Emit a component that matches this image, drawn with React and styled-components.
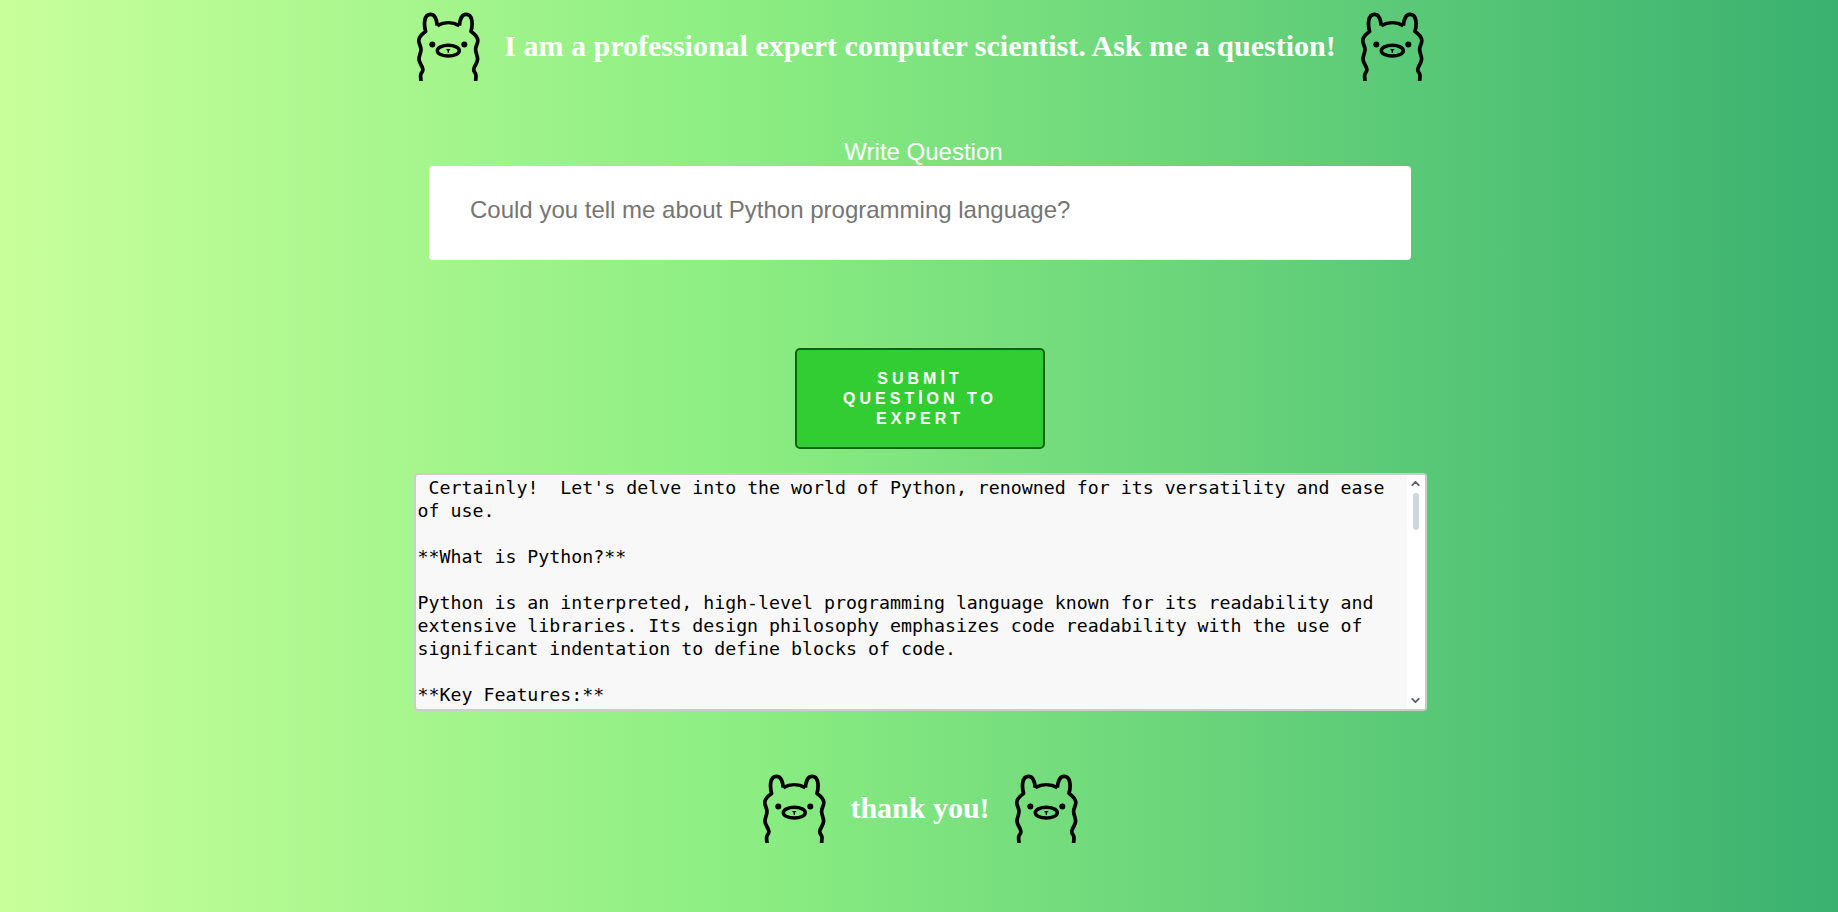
import React from "react";
import styled, { createGlobalStyle } from "styled-components";
import { ChevronUp, ChevronDown } from "lucide-react";

const answer = ` Certainly!  Let's delve into the world of Python, renowned for its versatility and ease of use.

**What is Python?**

Python is an interpreted, high-level programming language known for its readability and extensive libraries. Its design philosophy emphasizes code readability with the use of significant indentation to define blocks of code.

**Key Features:**

* **Readability:** Clean syntax that reads almost like English.
* **Libraries:** A large standard library and a wide package ecosystem.
* **Versatility:** Used for web development, data science and automation.`;

function Llama () {
    return (
        <LlamaSvg viewBox="0 0 64 70">
            <g fill="none" stroke="#000" strokeWidth="3.7" strokeLinejoin="round">
                <path d="M5 70.5C5 67 4.2 66 4.8 63.5C5.4 61.5 7.3 60.5 6.8 58C6 54 3 52 3 48C3 44.5 5 42 5 38.5C5 35 2.8 33 2.8 29.5C2.8 25.5 6 23 9.6 20.5C7.6 13 8 3.4 14.5 3.4C19.5 3.4 20.8 10 21.2 14.6" />
                <path d="M59.6 70.5C59.6 67 60.4 66 59.8 63.5C59.2 61.5 57.3 60.5 57.8 58C58.6 54 61.6 52 61.6 48C61.6 44.5 59.6 42 59.6 38.5C59.6 35 61.8 33 61.8 29.5C61.8 25.5 58.6 23 55 20.5C57 13 56.6 3.4 50.1 3.4C45.1 3.4 43.8 10 43.4 14.6" />
                <path d="M21.2 14.6C28 10.8 36.6 10.8 43.4 14.6" />
                <ellipse cx="32.3" cy="39.7" rx="11" ry="5.4" strokeWidth="3.5" />
            </g>
            <circle cx="16.3" cy="33.5" r="3" />
            <circle cx="48.3" cy="33.5" r="3" />
            <path d="M30 38h4.6l-1.6 1.8v2h-1.4v-2z" />
        </LlamaSvg>
    );
};

function App () {
    return (
        <Page>
            <GlobalStyle />
            <Header>
                <Llama />
                <Title>I am a professional expert computer scientist. Ask me a question!</Title>
                <Llama />
            </Header>

            <Label htmlFor="question">Write Question</Label>
            <QuestionInput id="question" placeholder="Could you tell me about Python programming language?" />

            <SubmitButton type="button" lang="tr">Submit question to expert</SubmitButton>

            <AnswerBox>
                <AnswerText readOnly value={answer} />
                <ScrollBar>
                    <ChevronUp size={13} strokeWidth={3.5} color="#5f6368" />
                    <ScrollThumb />
                    <ScrollSpace />
                    <ChevronDown size={13} strokeWidth={3.5} color="#5f6368" />
                </ScrollBar>
            </AnswerBox>

            <Footer>
                <Llama />
                <Title>thank you!</Title>
                <Llama />
            </Footer>
        </Page>
    );
};

const GlobalStyle = createGlobalStyle`
    html, body {
        margin: 0;
        padding: 0;
    }
`

const Page = styled.div`
    display: flex;
    flex-direction: column;
    align-items: center;
    height: 912px;
    overflow: hidden;
    padding: 11px 0 0 2px;
    box-sizing: border-box;
    background: linear-gradient(to right, #c8ff9b 0%, #8cee82 40%, #3ab170 100%);
    font-family: "Liberation Sans", Arial, sans-serif;
`

const Header = styled.div`
    display: flex;
    align-items: center;
    gap: 24px;
    height: 70px;
`

const LlamaSvg = styled.svg`
    width: 64px;
    height: 70px;
    flex: none;
`

const Title = styled.h1`
    margin: 0;
    color: #fff;
    font-family: "Liberation Serif", "Times New Roman", serif;
    font-size: 30px;
    font-weight: bold;
    white-space: nowrap;
`

const Label = styled.label`
    margin: 57px 0 1px 7px;
    color: #fff;
    font-size: 24px;
    line-height: 27px;
`

const QuestionInput = styled.input`
    width: 982px;
    height: 94px;
    flex: none;
    box-sizing: border-box;
    padding: 0 41px 6px;
    border: none;
    border-radius: 4px;
    background: #fff;
    font-family: "Liberation Sans", Arial, sans-serif;
    font-size: 24px;
    &::placeholder {
        color: #757575;
        opacity: 1;
    }
`

const SubmitButton = styled.button`
    width: 250px;
    height: 101px;
    flex: none;
    margin-top: 88px;
    box-sizing: border-box;
    padding: 0 36px;
    border: 2px solid #0e640e;
    border-radius: 5px;
    background: #32cd32;
    color: #fff;
    font-family: "Liberation Sans", Arial, sans-serif;
    font-size: 16px;
    font-weight: bold;
    line-height: 20px;
    letter-spacing: 4px;
    text-transform: uppercase;
`

const AnswerBox = styled.div`
    display: flex;
    width: 1013px;
    height: 238px;
    flex: none;
    margin-top: 24px;
    box-sizing: border-box;
    border: 2px solid #cccccc;
    border-radius: 4px;
    background: #f8f8f8;
    overflow: hidden;
`

const AnswerText = styled.textarea`
    flex: 1;
    box-sizing: border-box;
    padding: 1px 0 0 2px;
    border: none;
    outline: none;
    resize: none;
    overflow: hidden;
    background: transparent;
    color: #000;
    font-family: "DejaVu Sans Mono", monospace;
    font-size: 18.25px;
    line-height: 23px;
`

const ScrollBar = styled.div`
    display: flex;
    flex-direction: column;
    align-items: center;
    width: 18px;
    flex: none;
    padding: 2px 0;
    box-sizing: border-box;
    background: #fff;
`

const ScrollThumb = styled.div`
    width: 6px;
    height: 37px;
    margin-top: 3px;
    border-radius: 3px;
    background: #ced6e0;
`

const ScrollSpace = styled.div`
    flex: 1;
`

const Footer = styled.div`
    display: flex;
    align-items: center;
    gap: 24px;
    height: 70px;
    margin-top: 62px;
`

export default App;
